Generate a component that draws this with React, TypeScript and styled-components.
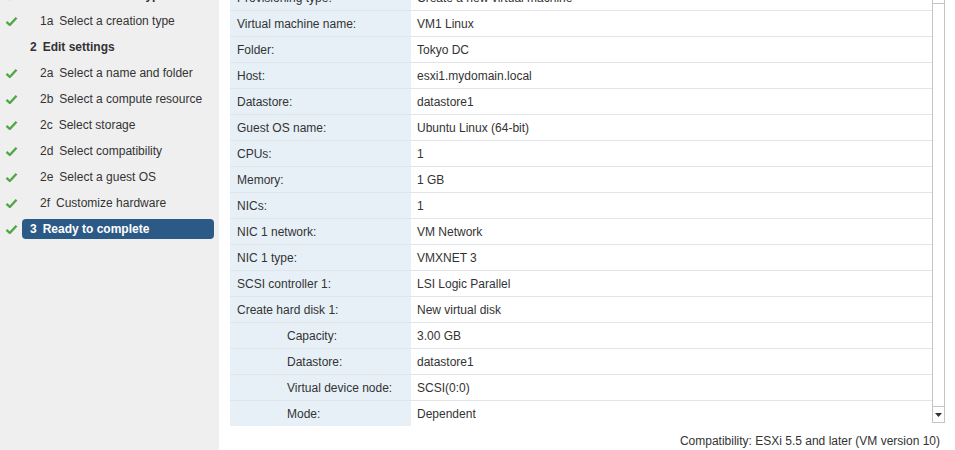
import styled, { createGlobalStyle } from "styled-components";

const GlobalStyle = createGlobalStyle`
  html, body {
    margin: 0;
    padding: 0;
    background: #ffffff;
    font-family: "Liberation Sans", Arial, sans-serif;
    font-size: 12px;
    color: #333333;
  }
`;

type Step = { num: string; label: string; done?: boolean; main?: boolean; active?: boolean };

const steps: Step[] = [
  { num: "1", label: "Select a creation type", main: true, done: true },
  { num: "1a", label: "Select a creation type", done: true },
  { num: "2", label: "Edit settings", main: true },
  { num: "2a", label: "Select a name and folder", done: true },
  { num: "2b", label: "Select a compute resource", done: true },
  { num: "2c", label: "Select storage", done: true },
  { num: "2d", label: "Select compatibility", done: true },
  { num: "2e", label: "Select a guest OS", done: true },
  { num: "2f", label: "Customize hardware", done: true },
  { num: "3", label: "Ready to complete", main: true, done: true, active: true },
];

type Row = { label: string; value: string; sub?: boolean };

const rows: Row[] = [
  { label: "Provisioning type:", value: "Create a new virtual machine" },
  { label: "Virtual machine name:", value: "VM1 Linux" },
  { label: "Folder:", value: "Tokyo DC" },
  { label: "Host:", value: "esxi1.mydomain.local" },
  { label: "Datastore:", value: "datastore1" },
  { label: "Guest OS name:", value: "Ubuntu Linux (64-bit)" },
  { label: "CPUs:", value: "1" },
  { label: "Memory:", value: "1 GB" },
  { label: "NICs:", value: "1" },
  { label: "NIC 1 network:", value: "VM Network" },
  { label: "NIC 1 type:", value: "VMXNET 3" },
  { label: "SCSI controller 1:", value: "LSI Logic Parallel" },
  { label: "Create hard disk 1:", value: "New virtual disk" },
  { label: "Capacity:", value: "3.00 GB", sub: true },
  { label: "Datastore:", value: "datastore1", sub: true },
  { label: "Virtual device node:", value: "SCSI(0:0)", sub: true },
  { label: "Mode:", value: "Dependent", sub: true },
];

const Check = () => (
  <svg width="13" height="11" viewBox="0 0 13 11">
    <path d="M1.5 5.8 L4.8 9 L11.5 1.8" fill="none" stroke="#4fa845" strokeWidth="2.4" strokeLinejoin="round" />
  </svg>
);

const App: React.FC = () => {
  return (
    <>
      <GlobalStyle />
      <Layout>
        <Sidebar>
          <StepList>
            {steps.map((s, i) => (
              <StepRow key={i}>
                <CheckSlot>{s.done && <Check />}</CheckSlot>
                <StepLabel $main={s.main} $active={s.active}>
                  <span className="num">{s.num}</span>
                  {s.label}
                </StepLabel>
              </StepRow>
            ))}
          </StepList>
        </Sidebar>
        <Main>
          <Viewport>
            <Table>
              {rows.map((r, i) => (
                <TableRow key={i}>
                  <LabelCell $sub={r.sub}>{r.label}</LabelCell>
                  <ValueCell>{r.value}</ValueCell>
                </TableRow>
              ))}
            </Table>
            <Scrollbar>
              <ArrowBox className="up" />
              <ArrowBox className="down">
                <svg width="7" height="4" viewBox="0 0 7 4">
                  <path d="M0 0 H7 L3.5 4 Z" fill="#333" />
                </svg>
              </ArrowBox>
            </Scrollbar>
          </Viewport>
          <Footer>Compatibility: ESXi 5.5 and later (VM version 10)</Footer>
        </Main>
      </Layout>
    </>
  );
};

export default App;

const Layout = styled.div`
  display: grid;
  grid-template-columns: 219px 1fr;
  width: 955px;
  height: 450px;
  overflow: hidden;
`;

const Sidebar = styled.div`
  background: #efefef;
  height: 450px;
  overflow: hidden;
`;

const StepList = styled.div`
  margin-top: -18px;
  display: flex;
  flex-direction: column;
`;

const StepRow = styled.div`
  height: 26px;
  display: flex;
  align-items: center;
`;

const CheckSlot = styled.div`
  width: 22px;
  padding-left: 5px;
  box-sizing: border-box;
  display: flex;
  align-items: center;
`;

const StepLabel = styled.div<{ $main?: boolean; $active?: boolean }>`
  height: 20px;
  width: 192px;
  box-sizing: border-box;
  display: flex;
  align-items: center;
  padding-left: ${({ $main }) => ($main ? "8px" : "18px")};
  border-radius: 4px;
  font-weight: ${({ $main }) => ($main ? "bold" : "normal")};
  background: ${({ $active }) => ($active ? "#2c5a86" : "transparent")};
  color: ${({ $active }) => ($active ? "#ffffff" : "#333333")};
  white-space: nowrap;
  .num {
    margin-right: 6px;
  }
`;

const Main = styled.div`
  padding-left: 11px;
  display: flex;
  flex-direction: column;
`;

const Viewport = styled.div`
  height: 426px;
  display: flex;
  overflow: hidden;
`;

const Table = styled.div`
  width: 702px;
  margin-top: -15px;
  display: flex;
  flex-direction: column;
`;

const TableRow = styled.div`
  flex: none;
  height: 26px;
  display: grid;
  grid-template-columns: 181px 1fr;
  box-sizing: border-box;
  border-bottom: 1px solid #e1e5e8;
  &:last-child {
    border-bottom: none;
  }
`;

const LabelCell = styled.div<{ $sub?: boolean }>`
  background: #e7f0f7;
  display: flex;
  align-items: center;
  padding-left: ${({ $sub }) => ($sub ? "57px" : "7px")};
  border-right: 1px solid #e8eef3;
`;

const ValueCell = styled.div`
  background: #ffffff;
  display: flex;
  align-items: center;
  padding-left: 6px;
`;

const Scrollbar = styled.div`
  width: 11px;
  height: 423px;
  border-left: 1px solid #c4c4c4;
  border-right: 1px solid #c4c4c4;
  display: flex;
  flex-direction: column;
  justify-content: space-between;
  background: #ffffff;
`;

const ArrowBox = styled.div`
  display: flex;
  align-items: center;
  justify-content: center;
  &.up {
    height: 3px;
    border-bottom: 1px solid #c4c4c4;
  }
  &.down {
    height: 15px;
    border-top: 1px solid #c4c4c4;
    border-bottom: 1px solid #c4c4c4;
  }
`;

const Footer = styled.div`
  padding-top: 8px;
  padding-right: 15px;
  text-align: right;
`;
